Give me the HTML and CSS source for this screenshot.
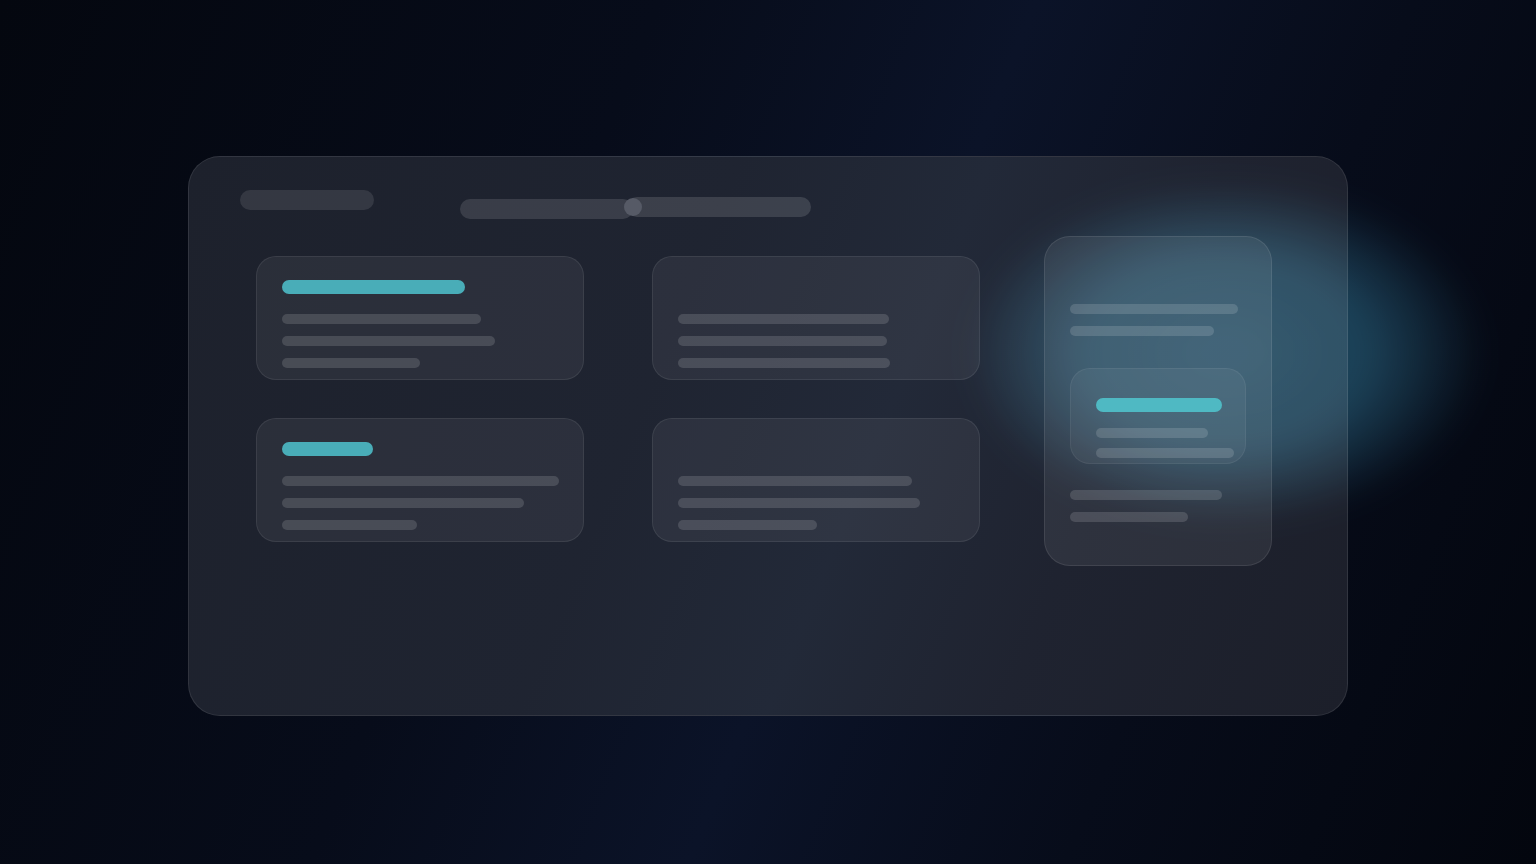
FILE: index.html
```html
<!DOCTYPE html>
<html lang="en">
<head>
<meta charset="utf-8">
<title>Dashboard skeleton</title>
<link rel="stylesheet" href="styles.css">
</head>
<body>
<div class="stage">
  <div class="panel">
    <div class="header">
      <div class="pill-title"></div>
      <div class="slider">
        <div class="track track-left"></div>
        <div class="track track-right"></div>
        <div class="knob"></div>
      </div>
    </div>
    <div class="content">
      <div class="grid">
        <div class="card">
          <div class="bar teal" style="width:183px"></div>
          <div class="bar line first" style="width:199px"></div>
          <div class="bar line" style="width:213px"></div>
          <div class="bar line" style="width:138px"></div>
        </div>
        <div class="card">
          <div class="bar teal ghost"></div>
          <div class="bar line first" style="width:211px"></div>
          <div class="bar line" style="width:209px"></div>
          <div class="bar line" style="width:212px"></div>
        </div>
        <div class="card">
          <div class="bar teal" style="width:91px"></div>
          <div class="bar line first" style="width:277px"></div>
          <div class="bar line" style="width:242px"></div>
          <div class="bar line" style="width:135px"></div>
        </div>
        <div class="card">
          <div class="bar teal ghost"></div>
          <div class="bar line first" style="width:234px"></div>
          <div class="bar line" style="width:242px"></div>
          <div class="bar line" style="width:139px"></div>
        </div>
      </div>
      <div class="side">
        <div class="bar line" style="width:168px"></div>
        <div class="bar line" style="width:144px"></div>
        <div class="inner">
          <div class="bar teal" style="width:126px"></div>
          <div class="bar line i1" style="width:112px"></div>
          <div class="bar line i2" style="width:138px"></div>
        </div>
        <div class="bar line" style="width:152px"></div>
        <div class="bar line" style="width:118px"></div>
      </div>
    </div>
  </div>
  <div class="glow"></div>
</div>
</body>
</html>
```

FILE: styles.css
```css
html, body {
  margin: 0;
  padding: 0;
  width: 1536px;
  height: 864px;
  overflow: hidden;
  font-family: "Inter", "Liberation Sans", sans-serif;
}

body {
  background: linear-gradient(112deg, #04070f 0%, #070c1a 35%, #0b1328 55%, #070c1a 75%, #03060e 100%);
}

.stage {
  position: relative;
  width: 1536px;
  height: 864px;
  box-sizing: border-box;
  padding-top: 156px;
  padding-left: 188px;
}

.panel {
  width: 1160px;
  height: 560px;
  box-sizing: border-box;
  border: 1px solid rgba(255, 255, 255, 0.09);
  border-radius: 32px;
  background: linear-gradient(112deg, #1d212c 0%, #1f2431 40%, #222938 58%, #1f2330 75%, #1c1f2a 100%);
  padding: 33px 0 0 51px;
}

.header {
  display: flex;
  align-items: flex-start;
  height: 29px;
}

.pill-title {
  width: 134px;
  height: 20px;
  border-radius: 10px;
  background: rgba(255, 255, 255, 0.1);
}

.slider {
  position: relative;
  display: flex;
  margin-left: 86px;
  margin-top: 6px;
  width: 351px;
  height: 23px;
}

.track {
  height: 20px;
  border-radius: 10px;
}

.track-left {
  width: 173px;
  margin-top: 3px;
  background: rgba(255, 255, 255, 0.12);
}

.track-right {
  width: 184px;
  margin-left: -6px;
  margin-top: 1px;
  background: rgba(255, 255, 255, 0.13);
}

.knob {
  position: absolute;
  left: 164px;
  top: 2px;
  width: 18px;
  height: 18px;
  border-radius: 50%;
  background: #565a66;
}

.content {
  display: flex;
  align-items: flex-start;
  margin-top: 17px;
}

.grid {
  display: grid;
  grid-template-columns: 328px 328px;
  grid-auto-rows: 124px;
  column-gap: 68px;
  row-gap: 38px;
  margin-left: 16px;
  margin-top: 20px;
}

.card {
  box-sizing: border-box;
  border: 1px solid rgba(255, 255, 255, 0.08);
  border-radius: 20px;
  background: rgba(255, 255, 255, 0.06);
  padding: 23px 25px 0;
}

.bar {
  border-radius: 5px;
}

.teal {
  height: 14px;
  border-radius: 7px;
  background: #49adb8;
}

.ghost {
  visibility: hidden;
}

.line {
  height: 10px;
  background: rgba(255, 255, 255, 0.14);
  margin-top: 12px;
}

.line.first {
  margin-top: 20px;
}

.side {
  position: relative;
  z-index: 2;
  box-sizing: border-box;
  width: 228px;
  height: 330px;
  margin-left: 64px;
  border: 1px solid rgba(255, 255, 255, 0.09);
  border-radius: 26px;
  background: rgba(255, 255, 255, 0.07);
  padding: 67px 25px 0;
}

.side > .line:first-child {
  margin-top: 0;
}

.inner {
  box-sizing: border-box;
  width: 176px;
  height: 96px;
  margin-top: 32px;
  margin-bottom: 26px;
  border: 1px solid rgba(255, 255, 255, 0.06);
  border-radius: 20px;
  background: rgba(255, 255, 255, 0.05);
  padding: 29px 25px 0;
}

.inner .teal {
  background: #4fb9c3;
}

.inner .line.i1 {
  margin-top: 16px;
}

.inner .line.i2 {
  margin-top: 10px;
}

.inner + .line {
  margin-top: 0;
}

.glow {
  position: absolute;
  z-index: 1;
  left: 965px;
  top: 180px;
  width: 520px;
  height: 345px;
  border-radius: 50%;
  background: radial-gradient(ellipse closest-side, rgba(26, 66, 80, 1) 0%, rgba(22, 58, 72, 0.95) 55%, rgba(18, 48, 62, 0) 100%);
  filter: blur(14px);
  mix-blend-mode: screen;
  pointer-events: none;
}
```
